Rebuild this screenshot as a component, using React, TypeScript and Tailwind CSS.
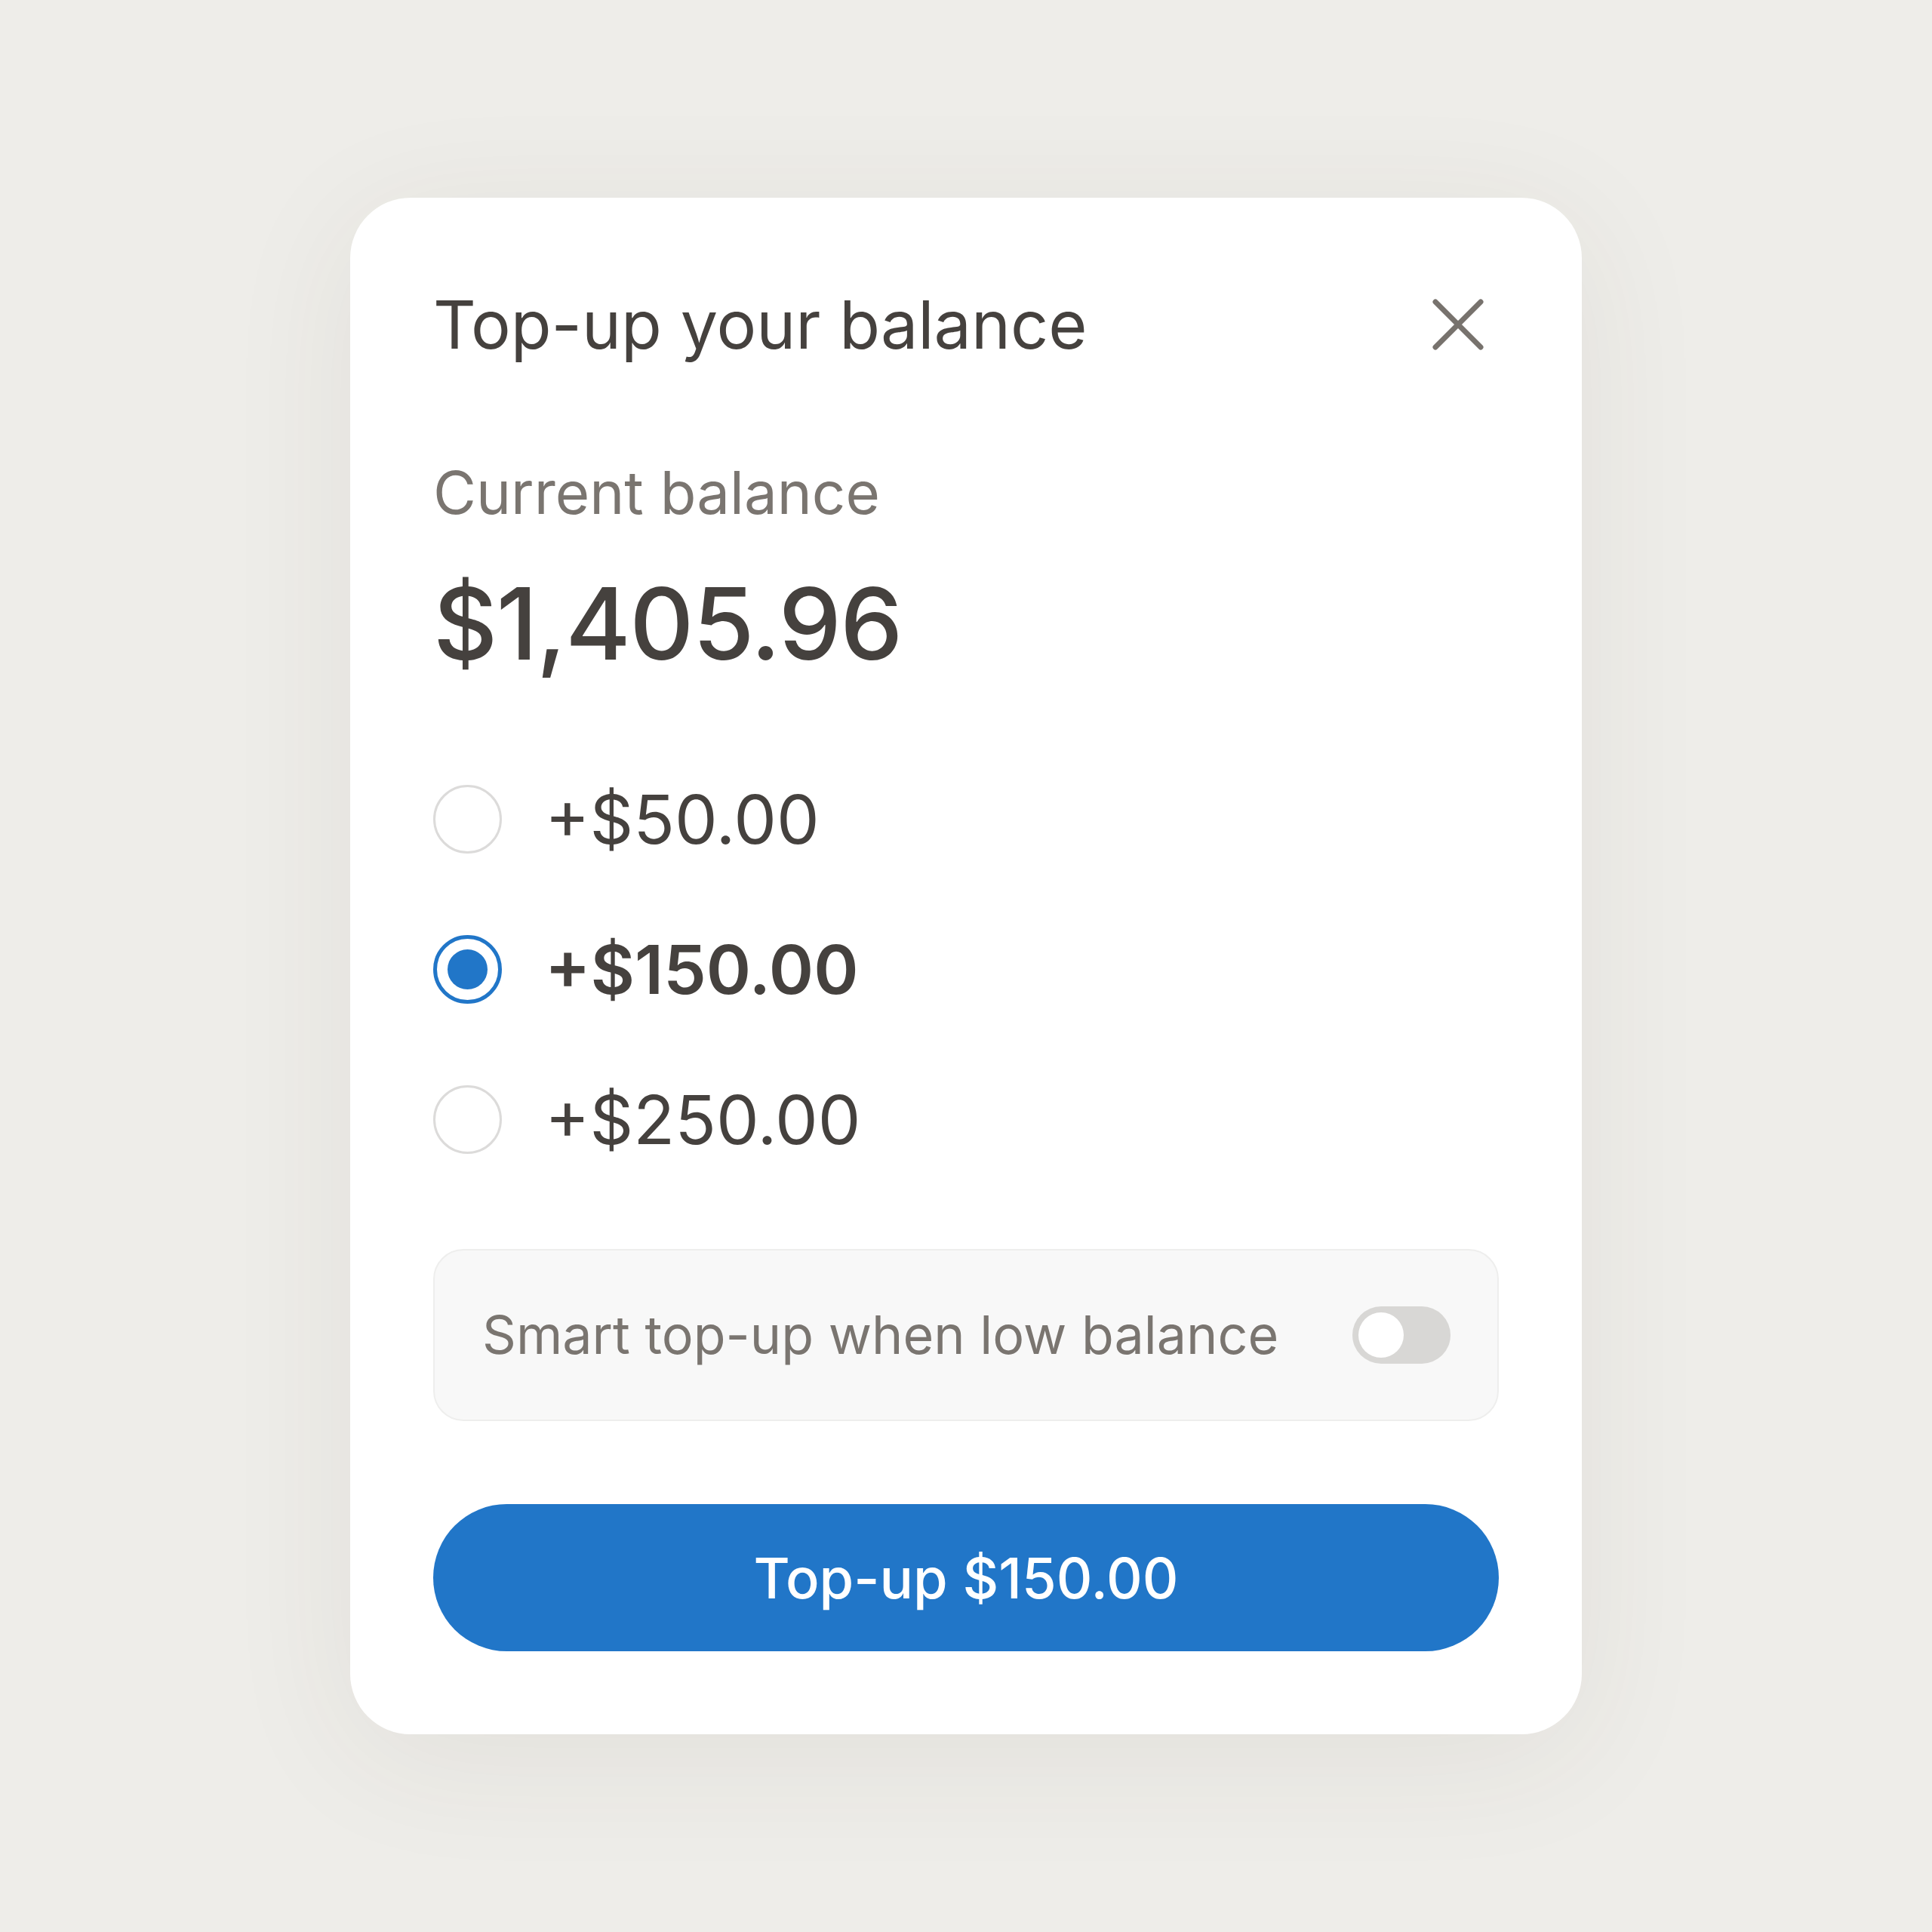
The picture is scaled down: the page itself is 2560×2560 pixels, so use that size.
import React from "react";

function Radio({ selected }: { selected: boolean }) {
  if (selected) {
    return (
      <div className="w-[91px] h-[91px] rounded-full border-[5px] border-[#2176C8] flex items-center justify-center shrink-0">
        <div className="w-[53px] h-[53px] rounded-full bg-[#2176C8]" />
      </div>
    );
  }
  return <div className="w-[91px] h-[91px] rounded-full border-[3px] border-[#DCDBDA] shrink-0" />;
}

export default function App() {
  const options = [
    { label: "+$50.00", selected: false },
    { label: "+$150.00", selected: true },
    { label: "+$250.00", selected: false },
  ];
  return (
    <div className="min-h-[2560px] w-full bg-[#EEEDE9] flex items-center justify-center font-[Inter,sans-serif]">
      <div className="w-[1632px] bg-white rounded-[80px] px-[110px] pt-[110px] pb-[110px] shadow-[0_30px_180px_rgba(70,60,40,0.07)] flex flex-col">
        <div className="h-[116px] flex items-center justify-between">
          <h1 className="text-[88px] leading-none font-normal text-[#45413E]">Top-up your balance</h1>
          <button className="w-[108px] h-[108px] flex items-center justify-center">
            <svg width="108" height="108" viewBox="0 0 108 108" fill="none">
              <path d="M24 24 L84 84 M84 24 L24 84" stroke="#77726D" strokeWidth="7" strokeLinecap="round" />
            </svg>
          </button>
        </div>
        <div className="mt-[126px] text-[78px] leading-none text-[#7A7570]">Current balance</div>
        <div className="mt-[68px] text-[132px] leading-none font-medium text-[#45413E] tracking-[-1.6px]">$1,405.96</div>
        <div className="mt-[148px] flex flex-col gap-[108px]">
          {options.map((o) => (
            <div key={o.label} className="flex items-center gap-[57px] h-[91px]">
              <Radio selected={o.selected} />
              <span className={`text-[90px] leading-none text-[#45413E] ${o.selected ? "font-semibold" : "font-normal"}`}>
                {o.label}
              </span>
            </div>
          ))}
        </div>
        <div className="mt-[126px] h-[228px] rounded-[40px] bg-[#F8F8F8] border-2 border-[#EEEEED] flex items-center justify-between pl-[63px] pr-[62px]">
          <span className="text-[70px] leading-none text-[#7A7570]">Smart top-up when low balance</span>
          <div className="w-[130px] h-[76px] rounded-full bg-[#D8D7D5] flex items-center px-[8px]">
            <div className="w-[60px] h-[60px] rounded-full bg-white" />
          </div>
        </div>
        <button className="mt-[110px] h-[195px] rounded-full bg-[#2176C8] flex items-center justify-center">
          <span className="text-[74px] leading-none font-medium text-white">Top-up $150.00</span>
        </button>
      </div>
    </div>
  );
}
